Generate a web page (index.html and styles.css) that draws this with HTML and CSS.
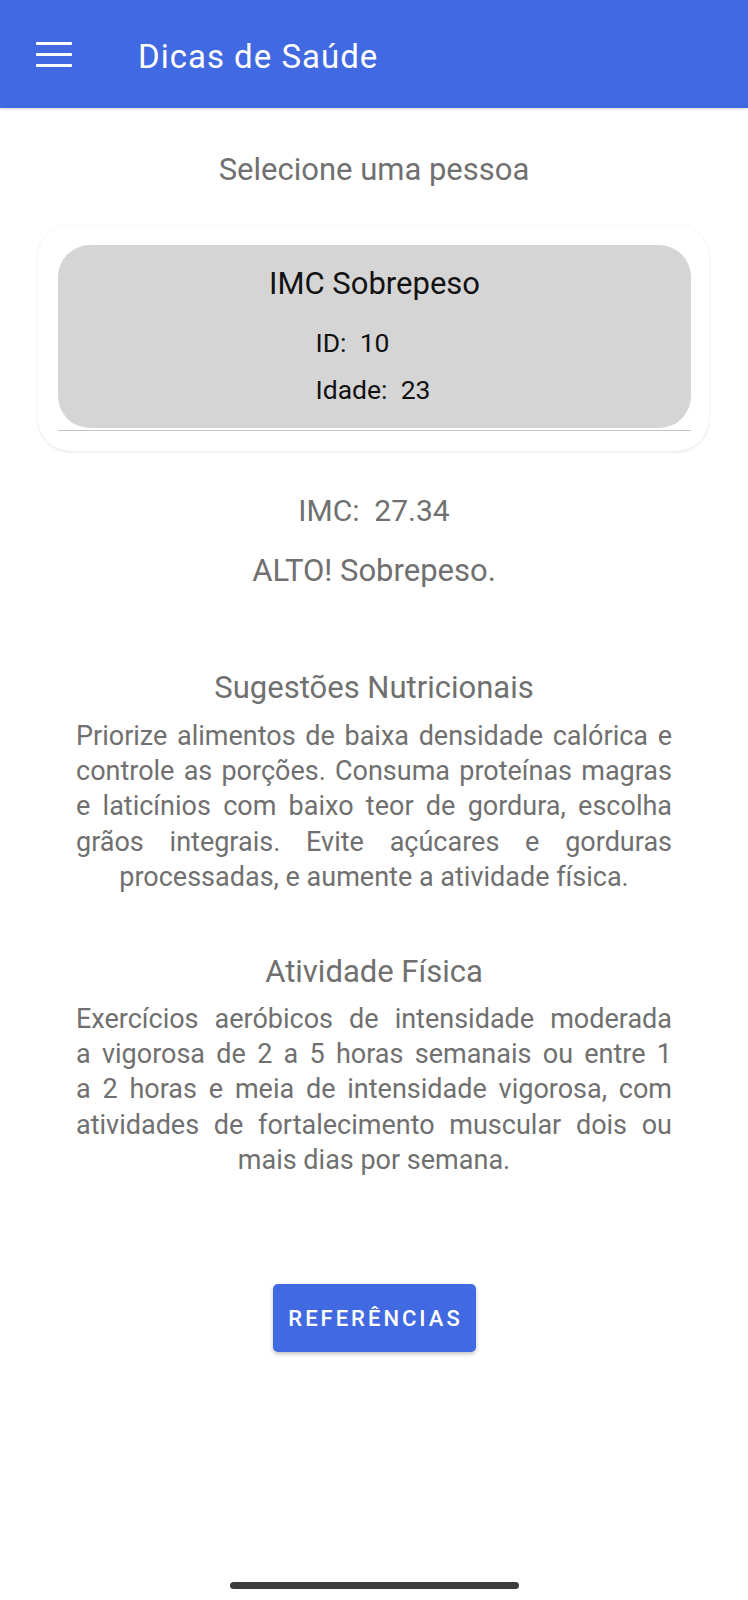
FILE: index.html
```html
<!DOCTYPE html>
<html lang="pt-BR">
<head>
<meta charset="utf-8">
<title>Dicas de Saúde</title>
<link rel="stylesheet" href="styles.css">
</head>
<body>
<header class="appbar">
  <div class="menu-icon" aria-label="Menu">
    <span></span><span></span><span></span>
  </div>
  <h1 class="appbar-title">Dicas de Saúde</h1>
</header>

<main class="content">
  <p class="select-label">Selecione uma pessoa</p>

  <section class="person-card">
    <div class="person-item">
      <h2 class="person-name">IMC Sobrepeso</h2>
      <div class="person-info">
        <div class="info-row">ID:&nbsp; 10</div>
        <div class="info-row">Idade:&nbsp; 23</div>
      </div>
    </div>
    <div class="divider"></div>
  </section>

  <p class="imc-value">IMC:&nbsp; 27.34</p>
  <p class="imc-status">ALTO! Sobrepeso.</p>

  <h3 class="section-title first">Sugestões Nutricionais</h3>
  <p class="section-text">
    <span class="line">Priorize alimentos de baixa densidade calórica e</span>
    <span class="line">controle as porções. Consuma proteínas magras</span>
    <span class="line">e laticínios com baixo teor de gordura, escolha</span>
    <span class="line">grãos integrais. Evite açúcares e gorduras</span>
    <span class="line last">processadas, e aumente a atividade física.</span>
  </p>

  <h3 class="section-title second">Atividade Física</h3>
  <p class="section-text">
    <span class="line">Exercícios aeróbicos de intensidade moderada</span>
    <span class="line">a vigorosa de 2 a 5 horas semanais ou entre 1</span>
    <span class="line">a 2 horas e meia de intensidade vigorosa, com</span>
    <span class="line">atividades de fortalecimento muscular dois ou</span>
    <span class="line last">mais dias por semana.</span>
  </p>

  <div class="button-row">
    <button class="ref-button" type="button">REFERÊNCIAS</button>
  </div>
</main>

<div class="home-indicator"></div>
</body>
</html>
```

FILE: styles.css
```css
* {
  box-sizing: border-box;
}

html, body {
  margin: 0;
  padding: 0;
}

body {
  width: 748px;
  min-height: 1600px;
  background: #ffffff;
  font-family: Roboto, "Noto Sans", "Liberation Sans", sans-serif;
  display: flex;
  flex-direction: column;
}

.appbar {
  height: 108px;
  background: #4169e1;
  display: flex;
  align-items: center;
  padding-left: 36px;
  box-shadow: 0 1px 3px rgba(0, 0, 0, 0.18);
  flex-shrink: 0;
}

.menu-icon {
  width: 36px;
  display: flex;
  flex-direction: column;
  gap: 8px;
}

.menu-icon span {
  display: block;
  height: 3px;
  background: #ffffff;
  border-radius: 1px;
}

.appbar-title {
  margin: 5px 0 0 66px;
  font-size: 33px;
  line-height: 40px;
  font-weight: 400;
  letter-spacing: 1px;
  color: #ffffff;
}

.content {
  display: flex;
  flex-direction: column;
  align-items: stretch;
}

.select-label {
  margin: 43px 0 0;
  text-align: center;
  font-size: 31px;
  line-height: 38px;
  color: #707070;
}

.person-card {
  margin: 36px 39px 0 38px;
  padding: 20px 18px 20px 20px;
  background: #ffffff;
  border-radius: 32px;
  box-shadow: 0 1px 3px rgba(0, 0, 0, 0.10), 0 0 1px rgba(0, 0, 0, 0.06);
}

.person-item {
  background: #d6d5d6;
  border-radius: 32px;
  padding: 19px 0 15px;
  display: flex;
  flex-direction: column;
  align-items: center;
}

.person-name {
  margin: 0;
  font-size: 31px;
  line-height: 40px;
  font-weight: 400;
  color: #111111;
}

.person-info {
  margin-top: 15px;
  align-self: center;
  min-width: 118px;
}

.info-row {
  font-size: 26.5px;
  line-height: 47px;
  color: #111111;
}

.divider {
  height: 1px;
  margin-top: 2px;
  background: #c4c4c4;
}

.imc-value {
  margin: 40px 0 0;
  text-align: center;
  font-size: 30px;
  line-height: 40px;
  color: #707070;
  white-space: pre;
}

.imc-status {
  margin: 20px 0 0;
  text-align: center;
  font-size: 31px;
  line-height: 40px;
  color: #707070;
}

.section-title {
  margin: 0;
  text-align: center;
  font-size: 31px;
  line-height: 38px;
  font-weight: 400;
  color: #707070;
}

.section-title.first {
  margin-top: 78px;
}

.section-title.second {
  margin-top: 58px;
}

.section-text {
  margin: 12px 76px 0 76px;
  font-size: 27px;
  line-height: 35.2px;
  color: #707070;
}

.section-title.second + .section-text {
  margin-top: 11px;
}

.section-text .line {
  display: block;
  text-align: justify;
  text-align-last: justify;
}

.section-text .line.last {
  text-align: center;
  text-align-last: center;
}

.button-row {
  display: flex;
  justify-content: center;
  margin-top: 106px;
}

.ref-button {
  width: 203px;
  height: 68px;
  border: none;
  border-radius: 5px;
  background: #4169e1;
  color: #ffffff;
  font-family: Roboto, "Noto Sans", sans-serif;
  font-size: 22px;
  font-weight: 500;
  letter-spacing: 3px;
  box-shadow: 0 2px 4px rgba(0, 0, 0, 0.25);
  padding: 0 0 0 3px;
}

.home-indicator {
  margin: auto auto 11px;
  width: 289px;
  height: 7px;
  border-radius: 4px;
  background: #3c3c3c;
}
```
